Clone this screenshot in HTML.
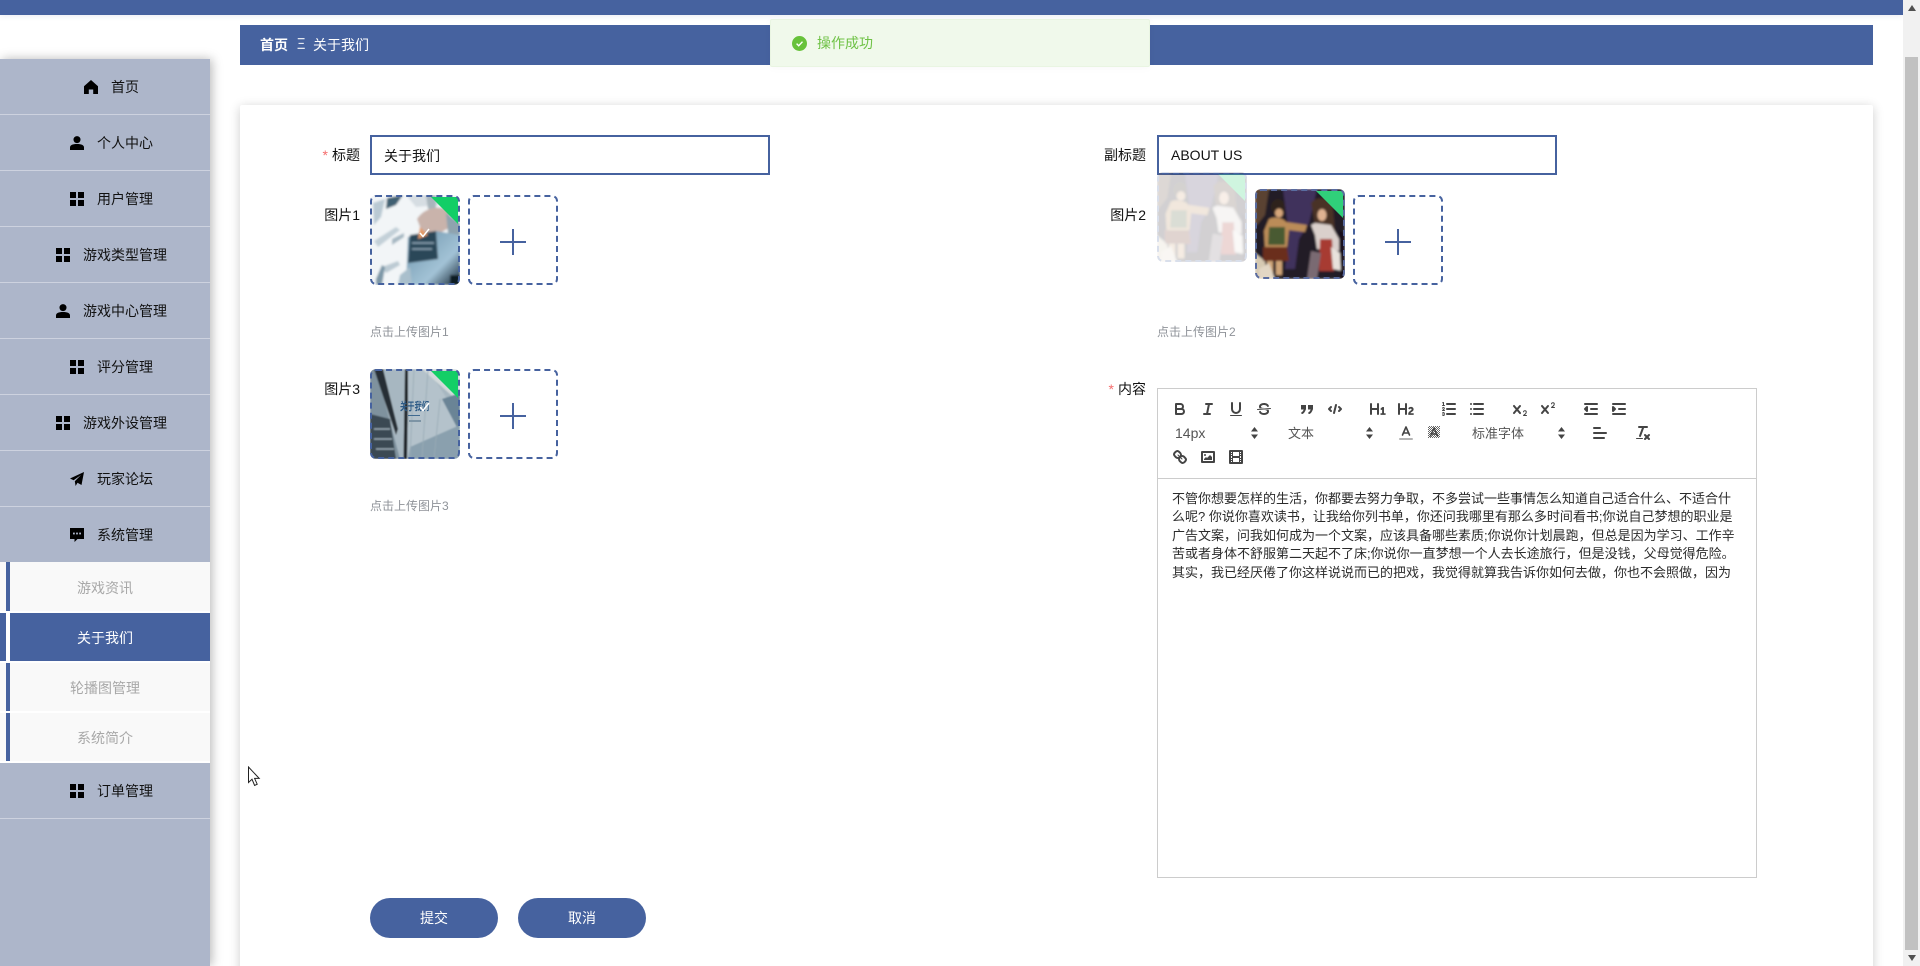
<!DOCTYPE html>
<html lang="zh-CN"><head><meta charset="utf-8"><title>关于我们</title>
<style>
*{box-sizing:border-box}
html,body{margin:0;padding:0;width:1920px;height:966px;overflow:hidden;background:#fff}
body{position:relative;font-family:"Liberation Sans","Noto Sans CJK SC","WenQuanYi Zen Hei",sans-serif;font-size:14px;color:#000}
.a{position:absolute}
.top{left:0;top:0;width:1903px;height:15px;background:#46629f;box-shadow:0 1px 6px rgba(70,98,159,.12)}
.sb{left:1903px;top:0;width:17px;height:966px;background:#f1f1f1}
.thumb{left:2px;top:57px;width:13px;height:893px;background:#c1c1c1}
.crumb{left:240px;top:25px;width:1633px;height:40px;background:#46629f;color:#fff;line-height:40px}
.msg{left:770px;top:19px;width:380px;height:48px;background:#f0f9eb;border:1px solid #e9f5e2;border-radius:2px;color:#6fc246;line-height:46px;box-shadow:0 1px 8px rgba(0,0,0,.03)}
.side{left:0;top:59px;width:210px;height:907px;background:#adb6ca;box-shadow:2px 0 10px rgba(0,0,0,.28)}
.it{position:absolute;left:0;width:210px;height:56px;padding-left:13px;padding-top:1px;display:flex;align-items:center;justify-content:center;border-bottom:1px solid #cdd2df;color:#111}
.it svg{width:14px;height:14px;margin-right:13px;flex:none}
.subw{position:absolute;left:0;top:503px;width:210px;height:201px;background:#fff}
.sub{position:absolute;left:0;width:210px;height:49px;background:#f9f9f9;color:#a8a8a8;text-align:center;line-height:50px}
.sub:before{content:"";position:absolute;left:6px;top:0;width:4px;height:100%;background:#46629f}
.sub.on{background:#46629f;color:#fff}.sub.on:before{background:#fff}
.card{left:240px;top:105px;width:1633px;height:900px;background:#fff;border-radius:2px;box-shadow:0 2px 11px rgba(0,0,0,.2)}
.lb{text-align:right;line-height:20px;white-space:nowrap;color:#111}
.lb i{font-style:normal;color:#f56c6c;margin-right:4px}
.inp{height:40px;width:400px;border:2px solid #46629f;background:#fff;line-height:36px;padding-left:12px;color:#111}
.dash{width:90px;height:90px;border:2px dashed #46629f;border-radius:6px;background:#fff}
.plus{position:absolute;left:30px;top:32px;width:26px;height:26px}
.pl1,.pl2{position:absolute;background:#46629f}
.pl1{left:0;top:12px;width:26px;height:1.6px}.pl2{left:12px;top:0;width:1.6px;height:26px}
.pic{width:90px;height:90px;overflow:hidden;border-radius:6px}
.pic svg{position:absolute;left:0;top:0;width:90px;height:90px}
.pic .bd{position:absolute;inset:0;border:2px dashed #46629f;border-radius:6px}
.hint{font-size:12px;color:#8f9399;line-height:16px;white-space:nowrap}
.btn{width:128px;height:40px;border-radius:20px;background:#46629f;color:#fff;text-align:center;line-height:41px}
.ed{left:1157px;top:388px;width:600px;height:490px;border:1px solid #ccc;background:#fff}
.tb{position:absolute;left:0;top:89px;width:598px;height:1px;background:#ccc}
.ic{position:absolute;width:18px;height:18px;fill:none;stroke:#444;stroke-width:2;stroke-linecap:round;stroke-linejoin:round}
.ic .f{fill:#444;stroke:none}.ic .t{stroke-width:1}
.pk{position:absolute;font-size:13px;color:#555;line-height:18px;white-space:nowrap}
.ar{position:absolute;width:7px;height:12px}
.ln{position:absolute;left:1172px;font-size:13px;line-height:18px;color:#2b2b2b;white-space:nowrap}
</style></head><body>

<div class="a top"></div>
<div class="a sb"><div class="a thumb"></div>
<svg class="a" style="left:5px;top:5px" width="8" height="6"><path d="M4 0L8 6H0Z" fill="#505050"/></svg>
<svg class="a" style="left:5px;top:955px" width="8" height="6"><path d="M4 6L8 0H0Z" fill="#505050"/></svg></div>

<div class="a crumb"><span class="a" style="left:20px;font-weight:700;top:0">首页</span><span class="a" style="left:56px;top:0;font-size:16px;transform:scaleX(.8);opacity:.85">Ξ</span><span class="a" style="left:73px;top:0">关于我们</span></div>

<div class="a side">
<div class="it" style="top:0"><svg viewBox="0 0 14 14"><path d="M7 0L14 6.2V14H9.2V9.5H4.8V14H0V6.2Z"/></svg>首页</div>
<div class="it" style="top:56px"><svg viewBox="0 0 14 14"><circle cx="7" cy="3.6" r="3.5"/><path d="M0 14V11.4C0 9.3 2.4 8 7 8S14 9.3 14 11.4V14Z"/></svg>个人中心</div>
<div class="it" style="top:112px"><svg viewBox="0 0 14 14"><rect width="6" height="6"/><rect x="8" width="6" height="6"/><rect y="8" width="6" height="6"/><rect x="8" y="8" width="6" height="6"/></svg>用户管理</div>
<div class="it" style="top:168px"><svg viewBox="0 0 14 14"><rect width="6" height="6"/><rect x="8" width="6" height="6"/><rect y="8" width="6" height="6"/><rect x="8" y="8" width="6" height="6"/></svg>游戏类型管理</div>
<div class="it" style="top:224px"><svg viewBox="0 0 14 14"><circle cx="7" cy="3.6" r="3.5"/><path d="M0 14V11.4C0 9.3 2.4 8 7 8S14 9.3 14 11.4V14Z"/></svg>游戏中心管理</div>
<div class="it" style="top:280px"><svg viewBox="0 0 14 14"><rect width="6" height="6"/><rect x="8" width="6" height="6"/><rect y="8" width="6" height="6"/><rect x="8" y="8" width="6" height="6"/></svg>评分管理</div>
<div class="it" style="top:336px"><svg viewBox="0 0 14 14"><rect width="6" height="6"/><rect x="8" width="6" height="6"/><rect y="8" width="6" height="6"/><rect x="8" y="8" width="6" height="6"/></svg>游戏外设管理</div>
<div class="it" style="top:392px"><svg viewBox="0 0 14 14"><path d="M14 0L11.5 13L7.5 10.8L5.6 14L4.8 9.3L11 3L3.6 8.2L0 6.5Z"/></svg>玩家论坛</div>
<div class="it" style="top:448px;border-bottom:0;padding-top:0"><svg viewBox="0 0 14 14"><path d="M0 0H14V11H7.5L4.5 14V11H0Z"/><rect x="3" y="4.6" width="1.8" height="1.8" fill="#adb6ca"/><rect x="6.1" y="4.6" width="1.8" height="1.8" fill="#adb6ca"/><rect x="9.2" y="4.6" width="1.8" height="1.8" fill="#adb6ca"/></svg>系统管理</div>
<div class="subw">
<div class="sub" style="top:0;line-height:52px">游戏资讯</div>
<div class="sub on" style="top:51px;height:48px">关于我们</div>
<div class="sub" style="top:101px;height:48px">轮播图管理</div>
<div class="sub" style="top:151px;height:48px;line-height:50px">系统简介</div>
</div>
<div class="it" style="top:704px"><svg viewBox="0 0 14 14"><rect width="6" height="6"/><rect x="8" width="6" height="6"/><rect y="8" width="6" height="6"/><rect x="8" y="8" width="6" height="6"/></svg>订单管理</div>
</div>

<div class="a card"></div>

<div class="a lb" style="left:300px;width:60px;top:145px"><i>*</i>标题</div>
<div class="a inp" style="left:370px;top:135px;line-height:38px">关于我们</div>
<div class="a lb" style="left:1086px;width:60px;top:145px">副标题</div>
<div class="a inp" style="left:1157px;top:135px">ABOUT US</div>

<!-- image 1 -->
<div class="a lb" style="left:300px;width:60px;top:205px">图片1</div>
<div class="a pic" style="left:370px;top:195px">
<svg viewBox="0 0 90 90"><defs><filter id="b1" x="-10%" y="-10%" width="120%" height="120%"><feGaussianBlur stdDeviation="1"/></filter><linearGradient id="g1" x1="0" y1="0" x2="1" y2="1"><stop offset="0" stop-color="#6a91a9"/><stop offset=".65" stop-color="#a3c3d6"/><stop offset="1" stop-color="#0f2231"/></linearGradient></defs>
<g filter="url(#b1)"><rect width="90" height="90" fill="#f2f5f7"/><path d="M3 8L15 4L11 22L4 30Z" fill="#b9c9d3"/><path d="M17 3L33 0L26 10L16 14Z" fill="#3f6072"/><path d="M36 0H66L70 10L46 12Z" fill="#d6dde2"/><path d="M56 0H66V14H58Z" fill="#a9b5bc"/><path d="M47 24C54 13 68 10 78 15L84 30L70 38L52 37Z" fill="#c9b3ab"/><path d="M76 18L90 28V50L78 38Z" fill="#8fa3ae"/><path d="M38 42L66 36L90 40V90H36Z" fill="url(#g1)"/><path d="M40 40L66 36L68 64L38 68Z" fill="#2a4659"/><path d="M50 32L58 40L48 44Z" fill="#e39a66"/><path d="M42 48H64M42 54H62" stroke="#9db6c6" stroke-width="1.2"/><path d="M4 46L26 32L30 35L8 52Z" fill="#c3d0d8"/><path d="M22 44L34 38L34 42L22 50Z" fill="#a6b8c3"/><path d="M12 72L28 66L30 70L16 78Z" fill="#bccad3"/><path d="M6 84L12 70L15 72L12 90H6Z" fill="#7d97a7"/><path d="M30 80L40 72L42 90H28Z" fill="#a9bfcc"/><rect x="80" y="80" width="10" height="10" fill="#0e1a22"/></g>
<path d="M61 2H88V29Z" fill="#13ce66"/><path d="M50 38L53 41.5L59 34" fill="none" stroke="#fff" stroke-width="1.5"/></svg><div class="bd"></div></div>
<div class="a dash" style="left:468px;top:195px"><div class="plus"><div class="pl1"></div><div class="pl2"></div></div></div>
<div class="a hint" style="left:370px;top:324px">点击上传图片1</div>

<!-- image 3 -->
<div class="a lb" style="left:300px;width:60px;top:379px">图片3</div>
<div class="a pic" style="left:370px;top:369px">
<svg viewBox="0 0 90 90"><defs><filter id="b3" x="-10%" y="-10%" width="120%" height="120%"><feGaussianBlur stdDeviation=".8"/></filter></defs>
<g filter="url(#b3)"><rect width="90" height="90" fill="#a7b7c1"/><path d="M0 0H6L30 90H0Z" fill="#7f929e"/><path d="M4 0H13L28 60L26 66Z" fill="#262e35"/><path d="M0 45L20 50L26 90H0Z" fill="#3a4852"/><path d="M4 60H20M4 70H22M6 80H24" stroke="#9aa9b3" stroke-width="1.4"/><path d="M35 0H38.5L37 90H33.5Z" fill="#1d2328"/><path d="M38 0H58L90 50V90H38Z" fill="#b4c2cb"/><path d="M52 0H90V34Z" fill="#d3dadb"/><path d="M72 30L90 24V64Z" fill="#6a8496"/><path d="M40 78L90 56V90H38Z" fill="#8aa0ae"/><path d="M44 0L40 90M58 0L52 90M70 30L64 90" stroke="#98aab5" stroke-width=".8"/></g>
<text transform="translate(30,41) scale(1,1.45)" font-size="7.3" fill="#2c5a86" font-family="Liberation Sans,Noto Sans CJK SC,sans-serif" font-weight="700">关于我们</text><rect x="38" y="46" width="12" height="1" fill="#3f6a90"/><rect x="39" y="51" width="12" height="2" fill="#7d94a5"/>
<path d="M61 2H88V29Z" fill="#13ce66"/><path d="M50 38L53 41.5L59 34" fill="none" stroke="#fff" stroke-width="1.5"/></svg><div class="bd"></div></div>
<div class="a dash" style="left:468px;top:369px"><div class="plus"><div class="pl1"></div><div class="pl2"></div></div></div>
<div class="a hint" style="left:370px;top:498px">点击上传图片3</div>

<!-- image 2 -->
<div class="a lb" style="left:1086px;width:60px;top:205px">图片2</div>
<div class="a pic" style="left:1157px;top:172px;opacity:.2">
<svg viewBox="0 0 90 90"><defs><filter id="b2" x="-10%" y="-10%" width="120%" height="120%"><feGaussianBlur stdDeviation="1.1"/></filter></defs>
<g id="art2" filter="url(#b2)"><rect width="90" height="90" fill="#241b28"/><path d="M28 0H62L54 34L44 50L40 80H30L34 46Z" fill="#41305c"/><path d="M0 0H14L10 26L2 36H0Z" fill="#5a4232"/><path d="M0 64L10 72L12 90H0Z" fill="#d6c9b2"/><ellipse cx="23" cy="18" rx="7" ry="8" fill="#2e241c"/><ellipse cx="24" cy="24" rx="4" ry="4.5" fill="#d6a67a"/><path d="M14 30C20 27 28 29 31 33L52 36L50 43L34 41L32 60H10L9 42Z" fill="#bb8c58"/><path d="M14 38H30V56H13Z" fill="#4a5a30"/><path d="M8 58H32L34 72H8Z" fill="#6a2f1f"/><path d="M12 72H18V88H12ZM21 72H27V86H21Z" fill="#cfa578"/><path d="M4 80L14 74L20 90H4Z" fill="#e2d6c4"/><path d="M56 14C62 6 76 8 78 18L80 44L70 38L60 36Z" fill="#4a3025"/><ellipse cx="67" cy="26" rx="4.5" ry="6" fill="#e0b292"/><path d="M56 36L60 34L76 36L84 50L84 62L62 60L60 46Z" fill="#dad0cc"/><path d="M65 50H77L79 82H64Z" fill="#a73a30"/><path d="M76 58L88 66V82L78 80Z" fill="#e8e2dc"/><path d="M56 62L66 64L62 90H52Z" fill="#7a6a72"/><path d="M84 40L90 46V90H86Z" fill="#15111a"/></g>
<path d="M61 2H88V29Z" fill="#13ce66"/></svg><div class="bd"></div></div>
<div class="a pic" style="left:1255px;top:189px">
<svg viewBox="0 0 90 90"><use href="#art2"/><path d="M61 2H88V29Z" fill="#30d07a"/></svg><div class="bd" style="border-color:#5a6ca0"></div></div>
<div class="a dash" style="left:1353px;top:195px"><div class="plus"><div class="pl1"></div><div class="pl2"></div></div></div>
<div class="a hint" style="left:1157px;top:324px">点击上传图片2</div>

<!-- editor -->
<div class="a lb" style="left:1086px;width:60px;top:379px"><i>*</i>内容</div>
<div class="a ed"><div class="tb"></div></div>

<svg class="ic" style="left:1171px;top:400px" viewBox="0 0 18 18"><path d="M5,4H9.5A2.5,2.5,0,0,1,12,6.5v0A2.5,2.5,0,0,1,9.5,9H5A0,0,0,0,1,5,9V4A0,0,0,0,1,5,4Z"/><path d="M5,9h5.5A2.5,2.5,0,0,1,13,11.5v0A2.5,2.5,0,0,1,10.5,14H5a0,0,0,0,1,0,0V9A0,0,0,0,1,5,9Z"/></svg>
<svg class="ic" style="left:1199px;top:400px" viewBox="0 0 18 18"><line x1="7" x2="13" y1="4" y2="4"/><line x1="5" x2="11" y1="14" y2="14"/><line x1="8" x2="10" y1="14" y2="4"/></svg>
<svg class="ic" style="left:1227px;top:400px" viewBox="0 0 18 18"><path d="M5,3V9a4.012,4.012,0,0,0,4,4H9a4.012,4.012,0,0,0,4-4V3"/><rect class="f" height="1" rx=".5" ry=".5" width="12" x="3" y="15"/></svg>
<svg class="ic" style="left:1255px;top:400px" viewBox="0 0 18 18"><line class="t" x1="15.5" x2="2.5" y1="8.5" y2="9.5"/><path class="f" d="M9.007,8C6.542,7.791,6,7.519,6,6.5,6,5.792,7.283,5,9,5c1.571,0,2.765.679,2.969,1.309a1,1,0,0,0,1.9-.617C13.356,4.106,11.354,3,9,3,6.2,3,4,4.538,4,6.5a3.2,3.2,0,0,0,.5,1.843Z"/><path class="f" d="M8.984,10C11.457,10.208,12,10.479,12,11.5c0,.708-1.283,1.5-3,1.5-1.571,0-2.765-.679-2.969-1.309a1,1,0,1,0-1.9.617C4.644,13.894,6.646,15,9,15c2.8,0,5-1.538,5-3.5a3.2,3.2,0,0,0-.5-1.843Z"/></svg>
<svg class="ic" style="left:1298px;top:400px" viewBox="0 0 18 18"><rect class="f" x="3" y="5" width="5" height="4.5"/><rect class="f" x="10" y="5" width="5" height="4.5"/><path d="M7,7C7,10.5,6,12,4.2,13"/><path d="M14,7C14,10.5,13,12,11.2,13"/></svg>
<svg class="ic" style="left:1326px;top:400px" viewBox="0 0 18 18"><polyline points="5 7 3 9 5 11"/><polyline points="13 7 15 9 13 11"/><line x1="10" x2="8" y1="5" y2="13"/></svg>
<svg class="ic" style="left:1369px;top:400px" viewBox="0 0 18 18"><path class="f" d="M10,4V14a1,1,0,0,1-2,0V10H3v4a1,1,0,0,1-2,0V4A1,1,0,0,1,3,4V8H8V4a1,1,0,0,1,2,0Zm6.06787,9.209H14.98975V7.59863a.54085.54085,0,0,0-.605-.60547h-.62744a1.01119,1.01119,0,0,0-.748.29688L11.645,8.56641a.5435.5435,0,0,0-.022.8584l.28613.30762a.53861.53861,0,0,0,.84717.0332l.09912-.08789a1.2137,1.2137,0,0,0,.2417-.35254h.02246s-.01123.30859-.01123.60547V13.209H12.041a.54085.54085,0,0,0-.605.60547v.43945a.54085.54085,0,0,0,.605.60547h4.02686a.54085.54085,0,0,0,.605-.60547v-.43945A.54085.54085,0,0,0,16.06787,13.209Z"/></svg>
<svg class="ic" style="left:1397px;top:400px" viewBox="0 0 18 18"><path class="f" d="M16.73975,13.81445v.43945a.54085.54085,0,0,1-.605.60547H11.855a.58392.58392,0,0,1-.64893-.60547V14.0127c0-2.90527,3.39941-3.42187,3.39941-4.55469a.77675.77675,0,0,0-.84717-.78125,1.17684,1.17684,0,0,0-.83594.38477c-.2749.26367-.561.374-.85791.13184l-.4292-.34082c-.30811-.24219-.38525-.51758-.1543-.81445a2.97155,2.97155,0,0,1,2.45361-1.17676,2.45393,2.45393,0,0,1,2.68408,2.40918c0,2.45312-3.1792,2.92676-3.27832,3.93848h2.79443A.54085.54085,0,0,1,16.73975,13.81445ZM9,3A.99974.99974,0,0,0,8,4V8H3V4A1,1,0,0,0,1,4V14a1,1,0,0,0,2,0V10H8v4a1,1,0,0,0,2,0V4A.99974.99974,0,0,0,9,3Z"/></svg>
<svg class="ic" style="left:1440px;top:400px" viewBox="0 0 18 18"><line x1="7" x2="15" y1="4" y2="4"/><line x1="7" x2="15" y1="9" y2="9"/><line x1="7" x2="15" y1="14" y2="14"/><line class="t" x1="2.5" x2="4.5" y1="5.5" y2="5.5"/><path class="f" d="M3.5,6A.5.5,0,0,1,3,5.5V3.085l-.276.138A.5.5,0,0,1,2.053,3c-.124-.247-.023-.324.224-.447l1-.5A.5.5,0,0,1,4,2.5v3A.5.5,0,0,1,3.5,6Z"/><path class="t" d="M4.5,10.5h-2c0-.234,1.85-1.076,1.85-2.234A.959.959,0,0,0,2.5,8.156"/><path class="t" d="M2.5,14.846a.959.959,0,0,0,1.85-.109A.7.7,0,0,0,3.75,14a.688.688,0,0,0,.6-.736.959.959,0,0,0-1.85-.109"/></svg>
<svg class="ic" style="left:1468px;top:400px" viewBox="0 0 18 18"><line x1="6" x2="15" y1="4" y2="4"/><line x1="6" x2="15" y1="9" y2="9"/><line x1="6" x2="15" y1="14" y2="14"/><line x1="3" x2="3" y1="4" y2="4"/><line x1="3" x2="3" y1="9" y2="9"/><line x1="3" x2="3" y1="14" y2="14"/></svg>
<svg class="ic" style="left:1511px;top:400px" viewBox="0 0 18 18"><path class="f" d="M15.5,15H13.861a3.858,3.858,0,0,0,1.914-2.975,1.8,1.8,0,0,0-1.6-1.751A1.921,1.921,0,0,0,12.021,11.7a.50013.50013,0,1,0,.957.291h0a.914.914,0,0,1,1.053-.725.81.81,0,0,1,.744.762c0,1.076-1.16971,1.86982-1.93971,2.43082A1.45639,1.45639,0,0,0,12,15.5a.5.5,0,0,0,.5.5h3a.5.5,0,0,0,0-1Z"/><path class="f" d="M9.65,5.241a1,1,0,0,0-1.409.108L6,7.964,3.759,5.349A1,1,0,0,0,2.192,6.59178Q2.21541,6.621,2.241,6.651L4.684,9.5,2.241,12.35A1,1,0,0,0,3.71,13.70722q.02557-.02768.049-.05722L6,11.036,8.241,13.65a1,1,0,1,0,1.567-1.24277Q9.78459,12.379,9.759,12.35L7.316,9.5,9.759,6.651A1,1,0,0,0,9.65,5.241Z"/></svg>
<svg class="ic" style="left:1539px;top:400px" viewBox="0 0 18 18"><path class="f" d="M15.5,7H13.861a4.015,4.015,0,0,0,1.914-2.975,1.8,1.8,0,0,0-1.6-1.751A1.922,1.922,0,0,0,12.021,3.7a.5.5,0,1,0,.957.291.917.917,0,0,1,1.053-.725.81.81,0,0,1,.744.762c0,1.077-1.164,1.925-1.934,2.486A1.423,1.423,0,0,0,12,7.5a.5.5,0,0,0,.5.5h3a.5.5,0,0,0,0-1Z"/><path class="f" d="M9.651,5.241a1,1,0,0,0-1.41.108L6,7.964,3.759,5.349a1,1,0,1,0-1.519,1.3L4.683,9.5,2.241,12.35a1,1,0,1,0,1.519,1.3L6,11.036,8.241,13.65a1,1,0,0,0,1.519-1.3L7.317,9.5,9.759,6.651A1,1,0,0,0,9.651,5.241Z"/></svg>
<svg class="ic" style="left:1582px;top:400px" viewBox="0 0 18 18"><line x1="3" x2="15" y1="14" y2="14"/><line x1="3" x2="15" y1="4" y2="4"/><line x1="9" x2="15" y1="9" y2="9"/><polyline style="fill:#444" points="5 7 5 11 3 9 5 7"/></svg>
<svg class="ic" style="left:1610px;top:400px" viewBox="0 0 18 18"><line x1="3" x2="15" y1="14" y2="14"/><line x1="3" x2="15" y1="4" y2="4"/><line x1="9" x2="15" y1="9" y2="9"/><polyline style="fill:#444" points="3 7 3 11 5 9 3 7"/></svg>

<div class="pk" style="left:1175px;top:424px;font-size:14px">14px</div>
<svg class="ar" style="left:1251px;top:427px" viewBox="0 0 7 12"><path d="M3.5 0L7 4.5H0ZM3.5 12L7 7.5H0Z" fill="#444"/></svg>
<div class="pk" style="left:1288px;top:425px">文本</div>
<svg class="ar" style="left:1366px;top:427px" viewBox="0 0 7 12"><path d="M3.5 0L7 4.5H0ZM3.5 12L7 7.5H0Z" fill="#444"/></svg>
<svg class="ic" style="left:1397px;top:424px" viewBox="0 0 18 18"><line style="opacity:.4" x1="3" x2="15" y1="15" y2="15"/><polyline style="stroke-width:1.6" points="5.5 11 9 3 12.5 11"/><line style="stroke-width:1.6" x1="11.63" x2="6.38" y1="9" y2="9"/></svg>
<svg class="ic" style="left:1425px;top:424px;stroke-width:1" viewBox="0 0 18 18"><defs><pattern id="dth" width="2" height="2" patternUnits="userSpaceOnUse"><rect width="1" height="1" fill="#666" stroke="none"/><rect x="1" y="1" width="1" height="1" fill="#666" stroke="none"/></pattern></defs><rect x="3" y="2" width="12" height="12" fill="url(#dth)" stroke="none"/><polyline style="stroke-width:1.5" points="5.5 12 9 4 12.5 12"/><line style="stroke-width:1.5" x1="11.6" x2="6.4" y1="10" y2="10"/></svg>
<div class="pk" style="left:1472px;top:425px">标准字体</div>
<svg class="ar" style="left:1558px;top:427px" viewBox="0 0 7 12"><path d="M3.5 0L7 4.5H0ZM3.5 12L7 7.5H0Z" fill="#444"/></svg>
<svg class="ic" style="left:1591px;top:424px" viewBox="0 0 18 18"><line x1="3" x2="15" y1="9" y2="9"/><line x1="3" x2="13" y1="14" y2="14"/><line x1="3" x2="9" y1="4" y2="4"/></svg>
<svg class="ic" style="left:1634px;top:424px" viewBox="0 0 18 18"><line x1="5" x2="13" y1="3" y2="3"/><line x1="6" x2="9.35" y1="12" y2="3"/><line x1="11" x2="15" y1="11" y2="15"/><line x1="15" x2="11" y1="11" y2="15"/><rect class="f" height="1" rx=".5" ry=".5" width="7" x="2" y="14"/></svg>

<svg class="ic" style="left:1171px;top:448px" viewBox="0 0 18 18"><line class="t" x1="7" x2="11" y1="7" y2="11"/><path d="M8.9,4.577a3.476,3.476,0,0,1,.36,4.679A3.476,3.476,0,0,1,4.577,8.9C3.185,7.5,2.035,6.4,4.217,4.217S7.5,3.185,8.9,4.577Z"/><path d="M13.423,9.1a3.476,3.476,0,0,0-4.679-.36,3.476,3.476,0,0,0,.36,4.679c1.392,1.392,2.5,2.542,4.679.36S14.815,10.5,13.423,9.1Z"/></svg>
<svg class="ic" style="left:1199px;top:448px" viewBox="0 0 18 18"><rect height="10" width="12" x="3" y="4"/><circle class="f" cx="6" cy="7" r="1"/><polyline class="f" points="5 12 5 11 7 9 8 10 11 7 13 9 13 12 5 12"/></svg>
<svg class="ic" style="left:1227px;top:448px" viewBox="0 0 18 18"><rect height="12" width="12" x="3" y="3"/><rect class="f" height="12" width="1" x="5" y="3"/><rect class="f" height="12" width="1" x="12" y="3"/><rect class="f" height="2" width="8" x="5" y="8"/><rect class="f" height="1" width="3" x="3" y="5"/><rect class="f" height="1" width="3" x="3" y="7"/><rect class="f" height="1" width="3" x="3" y="10"/><rect class="f" height="1" width="3" x="3" y="12"/><rect class="f" height="1" width="3" x="12" y="5"/><rect class="f" height="1" width="3" x="12" y="7"/><rect class="f" height="1" width="3" x="12" y="10"/><rect class="f" height="1" width="3" x="12" y="12"/></svg>

<div class="ln" style="top:490px">不管你想要怎样的生活，你都要去努力争取，不多尝试一些事情怎么知道自己适合什么、不适合什</div>
<div class="ln" style="top:508px">么呢? 你说你喜欢读书，让我给你列书单，你还问我哪里有那么多时间看书;你说自己梦想的职业是</div>
<div class="ln" style="top:527px">广告文案，问我如何成为一个文案，应该具备哪些素质;你说你计划晨跑，但总是因为学习、工作辛</div>
<div class="ln" style="top:545px">苦或者身体不舒服第二天起不了床;你说你一直梦想一个人去长途旅行，但是没钱，父母觉得危险。</div>
<div class="ln" style="top:564px">其实，我已经厌倦了你这样说说而已的把戏，我觉得就算我告诉你如何去做，你也不会照做，因为</div>

<div class="a btn" style="left:370px;top:898px">提交</div>
<div class="a btn" style="left:518px;top:898px">取消</div>

<div class="a msg"><svg class="a" style="left:21px;top:16px" width="15" height="15" viewBox="0 0 15 15"><circle cx="7.5" cy="7.5" r="7.5" fill="#67c23a"/><path d="M4.6 7.6L6.7 9.7L10.5 5.7" fill="none" stroke="#fff" stroke-width="1.4"/></svg><span class="a" style="left:46px">操作成功</span></div>

<svg class="a" style="left:247px;top:766px" width="14" height="21" viewBox="0 0 14 21"><path d="M1.5 1V16.5L5 13.2L7.6 19.4L10.2 18.2L7.6 12.4H12.2Z" fill="#fff" stroke="#222" stroke-width="1"/></svg>

</body></html>
